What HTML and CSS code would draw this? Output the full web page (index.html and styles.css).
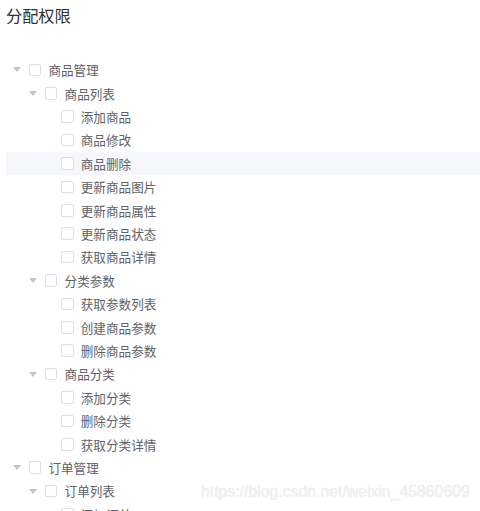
FILE: index.html
```html
<!DOCTYPE html>
<html lang="zh-CN">
<head>
<meta charset="utf-8">
<title>分配权限</title>
<link rel="stylesheet" href="styles.css">
</head>
<body>
<div class="dialog">
  <div class="header">分配权限</div>
  <div class="tree">
    <div class="node l1"><span class="caret"><svg viewBox="0 0 8 5" width="8" height="5"><path d="M0 0H8L4 5Z" fill="#c0c4cc"/></svg></span><span class="cb"></span><span class="label">商品管理</span></div>
    <div class="node l2"><span class="caret"><svg viewBox="0 0 8 5" width="8" height="5"><path d="M0 0H8L4 5Z" fill="#c0c4cc"/></svg></span><span class="cb"></span><span class="label">商品列表</span></div>
    <div class="node l3"><span class="caret"></span><span class="cb"></span><span class="label">添加商品</span></div>
    <div class="node l3"><span class="caret"></span><span class="cb"></span><span class="label">商品修改</span></div>
    <div class="node l3 hover"><span class="caret"></span><span class="cb"></span><span class="label">商品删除</span></div>
    <div class="node l3"><span class="caret"></span><span class="cb"></span><span class="label">更新商品图片</span></div>
    <div class="node l3"><span class="caret"></span><span class="cb"></span><span class="label">更新商品属性</span></div>
    <div class="node l3"><span class="caret"></span><span class="cb"></span><span class="label">更新商品状态</span></div>
    <div class="node l3"><span class="caret"></span><span class="cb"></span><span class="label">获取商品详情</span></div>
    <div class="node l2"><span class="caret"><svg viewBox="0 0 8 5" width="8" height="5"><path d="M0 0H8L4 5Z" fill="#c0c4cc"/></svg></span><span class="cb"></span><span class="label">分类参数</span></div>
    <div class="node l3"><span class="caret"></span><span class="cb"></span><span class="label">获取参数列表</span></div>
    <div class="node l3"><span class="caret"></span><span class="cb"></span><span class="label">创建商品参数</span></div>
    <div class="node l3"><span class="caret"></span><span class="cb"></span><span class="label">删除商品参数</span></div>
    <div class="node l2"><span class="caret"><svg viewBox="0 0 8 5" width="8" height="5"><path d="M0 0H8L4 5Z" fill="#c0c4cc"/></svg></span><span class="cb"></span><span class="label">商品分类</span></div>
    <div class="node l3"><span class="caret"></span><span class="cb"></span><span class="label">添加分类</span></div>
    <div class="node l3"><span class="caret"></span><span class="cb"></span><span class="label">删除分类</span></div>
    <div class="node l3"><span class="caret"></span><span class="cb"></span><span class="label">获取分类详情</span></div>
    <div class="node l1"><span class="caret"><svg viewBox="0 0 8 5" width="8" height="5"><path d="M0 0H8L4 5Z" fill="#c0c4cc"/></svg></span><span class="cb"></span><span class="label">订单管理</span></div>
    <div class="node l2"><span class="caret"><svg viewBox="0 0 8 5" width="8" height="5"><path d="M0 0H8L4 5Z" fill="#c0c4cc"/></svg></span><span class="cb"></span><span class="label">订单列表</span></div>
    <div class="node l3"><span class="caret"></span><span class="cb"></span><span class="label">添加订单</span></div>
  </div>
  <div class="watermark">https://blog.csdn.net/weixin_45860609</div>
</div>
</body>
</html>
```
FILE: styles.css
```css
html, body {
  margin: 0;
  padding: 0;
  background: #fff;
}
body {
  width: 480px;
  height: 511px;
  overflow: hidden;
  font-family: "Noto Sans CJK SC", "Noto Sans", sans-serif;
}
.dialog {
  position: relative;
  height: 511px;
  overflow: hidden;
}
.header {
  padding: 5px 0 0 6px;
  font-size: 16.2px;
  line-height: 20px;
  color: #303133;
}
.tree {
  margin-top: 33.3px;
  margin-left: 6px;
}
.node {
  display: flex;
  align-items: center;
  height: 23.4px;
  font-size: 12.6px;
  color: #606266;
}
.node.hover {
  background: #f5f7fa;
}
.l1 { padding-left: 0; }
.l2 { padding-left: 16.2px; }
.l3 { padding-left: 32.4px; }
.caret {
  width: 21.6px;
  height: 23.4px;
  display: flex;
  align-items: center;
  justify-content: center;
  padding-left: 1px;
  box-sizing: border-box;
}
.caret svg {
  display: block;
}
.cb {
  width: 12.6px;
  height: 12.6px;
  box-sizing: border-box;
  border: 1px solid #dcdfe6;
  border-radius: 2px;
  background: #fff;
  margin-left: 1px;
  margin-right: 7.2px;
  flex: none;
}
.label {
  line-height: 23.4px;
  white-space: nowrap;
}
.watermark {
  position: absolute;
  left: 201px;
  top: 483px;
  font-family: "Liberation Sans", Arial, sans-serif;
  font-size: 15.8px;
  color: #f2f2f2;
  text-shadow: 0 0 1px #e0e0e0;
  white-space: nowrap;
}
```
